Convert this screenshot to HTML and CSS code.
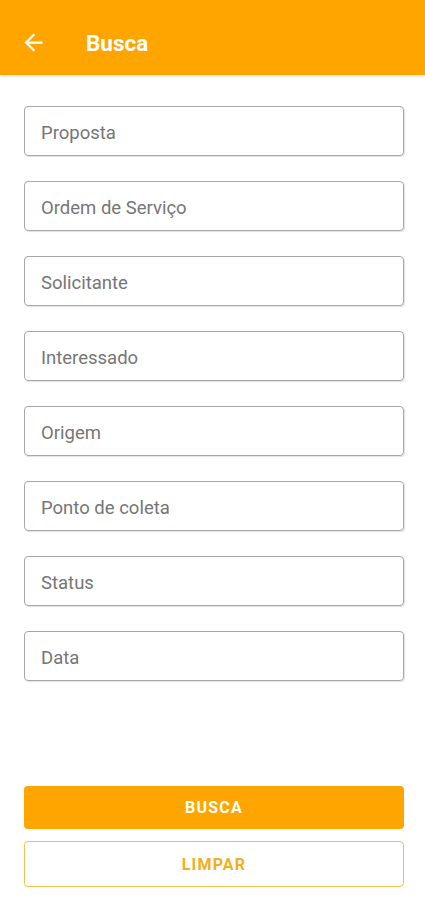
FILE: index.html
```html
<!DOCTYPE html>
<html lang="pt-BR">
<head>
  <meta charset="UTF-8">
  <meta name="viewport" content="width=device-width, initial-scale=1">
  <title>Busca</title>
  <link rel="stylesheet" href="styles.css">
</head>
<body>
  <!-- Barra superior -->
  <header class="topbar">
    <svg class="back" width="27" height="27" viewBox="0 0 24 24">
      <path d="M20 11H7.83l5.59-5.59L12 4l-8 8 8 8 1.41-1.41L7.83 13H20v-2z" fill="#fff"/>
    </svg>
    <h1>Busca</h1>
  </header>

  <!-- Campos de busca -->
  <main class="form">
    <div class="field">Proposta</div>
    <div class="field">Ordem de Serviço</div>
    <div class="field">Solicitante</div>
    <div class="field">Interessado</div>
    <div class="field">Origem</div>
    <div class="field">Ponto de coleta</div>
    <div class="field">Status</div>
    <div class="field">Data</div>
  </main>

  <!-- Botões -->
  <div class="actions">
    <button class="btn btn-primary">BUSCA</button>
    <button class="btn btn-outline">LIMPAR</button>
  </div>
</body>
</html>
```
FILE: styles.css
```css
* {
  margin: 0;
  padding: 0;
  box-sizing: border-box;
}
body {
  font-family: Roboto, 'Noto Sans', sans-serif;
  background: #fff;
  width: 425px;
  height: 900px;
  display: flex;
  flex-direction: column;
}
/* Barra superior */
.topbar {
  height: 75px;
  background: #ffa500;
  display: flex;
  align-items: center;
  padding: 10px 0 0 20px;
  box-shadow: 0 1px 3px rgba(0, 0, 0, 0.15);
}
.topbar h1 {
  color: #fff;
  font-size: 22.5px;
  font-weight: 700;
  margin-left: 39px;
}
/* Campos */
.form {
  padding: 31px 21px 0 24px;
  display: flex;
  flex-direction: column;
  gap: 25px;
}
.field {
  height: 50px;
  border: 1px solid #a8a8a8;
  border-radius: 4px;
  box-shadow: 1px 1px 1px rgba(0, 0, 0, 0.12);
  padding: 3px 0 0 16px;
  display: flex;
  align-items: center;
  font-size: 18.5px;
  color: #767676;
}
/* Botões */
.actions {
  margin-top: auto;
  padding: 0 21px 13px 24px;
  display: flex;
  flex-direction: column;
  gap: 12px;
}
.btn {
  font-family: Roboto, 'Noto Sans', sans-serif;
  font-size: 16px;
  font-weight: 700;
  letter-spacing: 1.2px;
  border-radius: 4px;
}
.btn-primary {
  height: 43px;
  border: none;
  background: #ffa500;
  color: #fff;
}
.btn-outline {
  height: 46px;
  background: #fff;
  border: 1px solid #f2c14e;
  color: #f0b020;
}
```
